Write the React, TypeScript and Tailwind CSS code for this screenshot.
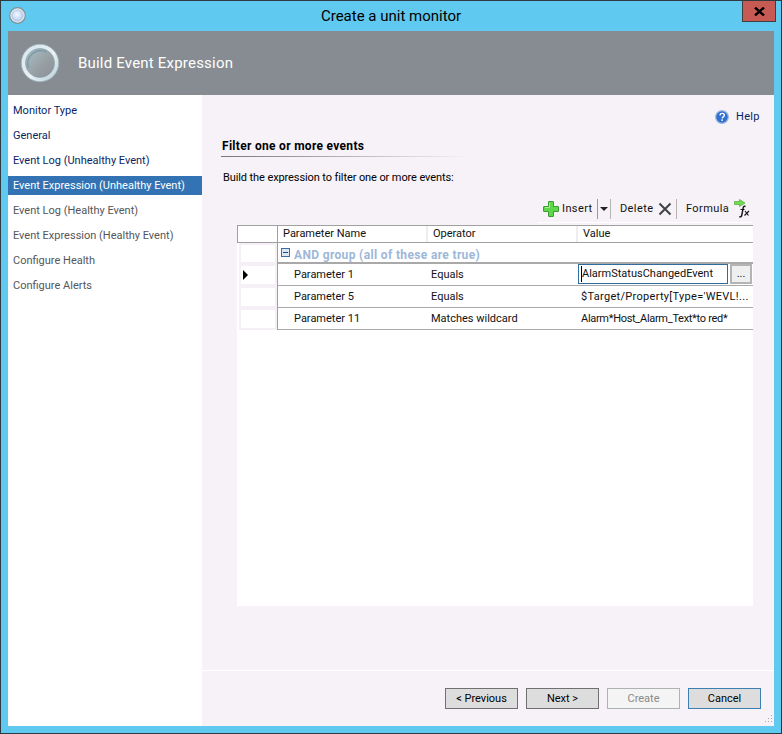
const font = "[font-family:'Roboto','Liberation_Sans',sans-serif]";

const steps = [
  { label: "Monitor Type", cls: "h-[25px] text-[#0b1f66]" },
  { label: "General", cls: "h-[25px] text-[#0b1f66]" },
  { label: "Event Log (Unhealthy Event)", cls: "h-[25px] text-[#0b1f66]" },
  { label: "Event Expression (Unhealthy Event)", cls: "my-[3px] h-[19px] bg-[#3373b3] text-white" },
  { label: "Event Log (Healthy Event)", cls: "h-[25px] text-[#55565a]" },
  { label: "Event Expression (Healthy Event)", cls: "h-[25px] text-[#55565a]" },
  { label: "Configure Health", cls: "h-[25px] text-[#55565a]" },
  { label: "Configure Alerts", cls: "h-[25px] text-[#55565a]" },
];

const rows = [
  { name: "Parameter 5", op: "Equals", value: "$Target/Property[Type='WEVL!...", cls: "tracking-[.3px]" },
  { name: "Parameter 11", op: "Matches wildcard", value: "Alarm*Host_Alarm_Text*to red*", cls: "tracking-[-.3px]" },
];

function SmallOrb() {
  return (
    <svg width="17" height="17" viewBox="0 0 17 17">
      <defs>
        <radialGradient id="smallFill" cx="45%" cy="40%" r="60%">
          <stop offset="0%" stopColor="#f6f9ff" />
          <stop offset="100%" stopColor="#b4cdf3" />
        </radialGradient>
      </defs>
      <circle cx="8.500" cy="8.500" r="7.800" fill="#e4eef5" stroke="#7f9198" strokeWidth="1.200" />
      <circle cx="8.500" cy="8.500" r="5.600" fill="url(#smallFill)" stroke="#9fb4c6" strokeWidth=".6" />
    </svg>
  );
}

function BigOrb() {
  return (
    <svg width="40" height="40" viewBox="0 0 40 40">
      <defs>
        <linearGradient id="bigRing" x1="0" y1="0" x2="1" y2="1">
          <stop offset="0%" stopColor="#d4e4ec" />
          <stop offset="55%" stopColor="#e8f2f6" />
          <stop offset="100%" stopColor="#b3cbd6" />
        </linearGradient>
        <linearGradient id="bigFill" x1="0" y1="0" x2="1" y2="1">
          <stop offset="0%" stopColor="#a9c0c8" />
          <stop offset="60%" stopColor="#979ea3" />
          <stop offset="100%" stopColor="#8b9095" />
        </linearGradient>
      </defs>
      <circle cx="20" cy="20" r="18.700" fill="url(#bigRing)" stroke="#9fb2ba" strokeWidth=".8" />
      <circle cx="20" cy="20" r="14.500" fill="url(#bigFill)" stroke="#8fa2aa" strokeWidth=".8" />
      <path d="M8.500 25a13 13 0 0 1 18-16" fill="none" stroke="#7c99a6" strokeWidth="1.500" />
    </svg>
  );
}

function HelpIcon() {
  return (
    <svg width="14" height="14" viewBox="0 0 15 15">
      <circle cx="7.5" cy="7.5" r="6.800" fill="#3470cf" stroke="#9fb8e2" strokeWidth="1.200" />
      <path d="M5.300 5.800c.2-1.500 1.200-2.200 2.400-2.200 1.300 0 2.300.8 2.300 2 0 1.700-2.200 1.700-2.300 3.400" fill="none" stroke="#fff" strokeWidth="1.500" />
      <rect x="6.800" y="10" width="1.600" height="1.700" fill="#fff" />
    </svg>
  );
}

function PlusIcon() {
  return (
    <svg width="16" height="16" viewBox="0 0 16 16">
      <path d="M5.500 1q0-.5.5-.5h4q.5 0 .5.5v4.500H15q.5 0 .5.5v4q0 .5-.5.5h-4.500V15q0 .5-.5.5H6q-.5 0-.5-.5v-4.500H1q-.5 0-.5-.5V6q0-.5.5-.5h4.500z" fill="#5ed84a" stroke="#3a9a36" strokeWidth="1" />
      <path d="M6.500 2v4.500H2" fill="none" stroke="#a8f090" strokeWidth="1" />
    </svg>
  );
}

function DeleteIcon() {
  return (
    <svg width="14" height="14" viewBox="0 0 14 14">
      <path d="M1.500 1.500l11 11M12.500 1.500l-11 11" stroke="#3f4347" strokeWidth="2" fill="none" />
    </svg>
  );
}

function FormulaIcon() {
  return (
    <svg width="16" height="20" viewBox="0 0 16 20" className="overflow-visible">
      <path d="M.500 2.500h5V.500L11 4l-5.500 3.500v-2h-5z" fill="#72dc52" stroke="#52a838" strokeWidth=".7" />
      <path d="M11.500 7.500c-1.300-.6-2-.1-2.300 1.300L7.800 16c-.3 1.500-1 2.200-2.600 1.800" fill="none" stroke="#111" strokeWidth="1.400" />
      <path d="M6.500 10.500h4M11 12l3.500 4.500M15 12l-4.500 4.500" fill="none" stroke="#111" strokeWidth="1.100" />
    </svg>
  );
}

function RowHead({ arrow }: { arrow?: boolean }) {
  return (
    <div className="flex h-full w-[41px] shrink-0 items-center border-r border-r-[#a0a0a0] bg-white pl-[2px]">
      <div className="flex h-full w-[38px] items-center border-2 border-[#f4f0f5] pl-[2px]">
        {arrow && <div className="h-0 w-0 border-y-[5px] border-l-[5px] border-y-transparent border-l-black" />}
      </div>
    </div>
  );
}

function FooterButton({ label, tone }: { label: string; tone: "normal" | "disabled" | "default" }) {
  const cls =
    tone === "disabled"
      ? "border-[#adb2b5] bg-[#f4f4f4] text-[#8a8a8a]"
      : tone === "default"
        ? "border-[#3c7fb1] bg-[#dddddd] text-black"
        : "border-[#707070] bg-[#dddddd] text-black";
  return <div className={`flex h-[21px] w-[73px] items-center justify-center border ${cls}`}>{label}</div>;
}

export default function App() {
  return (
    <div className={`flex h-[734px] w-[782px] flex-col overflow-hidden border border-[#2f3a40] bg-[#60c9ef] text-[11px] leading-[16px] ${font}`}>
      {/* caption */}
      <div className="relative flex h-[30px] shrink-0 items-center justify-center">
        <div className="absolute left-[8px] top-[6px]">
          <SmallOrb />
        </div>
        <span className="text-[15px] text-black">Create a unit monitor</span>
        <div className="absolute right-[5px] top-0 flex h-[21px] w-[34px] items-center justify-center border border-t-0 border-[#3f3f3f] bg-[#c75b54]">
          <svg width="11" height="9" viewBox="0 0 11 9">
            <path d="M1 .500l9 8M10 .500l-9 8" stroke="#000" strokeWidth="2.400" fill="none" />
          </svg>
        </div>
      </div>

      <div className="mx-[7px] mb-[7px] flex min-h-0 flex-1 flex-col">
        {/* banner */}
        <div className="flex h-[64px] shrink-0 items-center gap-[18px] bg-[#868c92] pl-[12px]">
          <BigOrb />
          <span className="text-[15px] tracking-[.2px] text-white">Build Event Expression</span>
        </div>

        <div className="flex min-h-0 flex-1">
          {/* steps */}
          <div className="flex w-[194px] shrink-0 flex-col bg-white pt-[3px]">
            {steps.map((s) => (
              <div key={s.label} className={`flex items-center whitespace-nowrap pl-[5px] ${s.cls}`}>
                {s.label}
              </div>
            ))}
          </div>

          {/* page */}
          <div className="flex min-w-0 flex-1 flex-col bg-[#f6f2f7]">
            <div className="flex h-[576px] shrink-0 flex-col border-b border-b-white pl-[19px] pr-[21px]">
              <div className="flex items-center justify-end gap-[7px] pt-[14px] text-[#0b1f66]">
                <HelpIcon />
                <span className="mr-[-5px] w-[22px] tracking-[.3px]">Help</span>
              </div>
              <div className="mt-[13px] pl-px text-[12px] font-bold tracking-[.3px] text-black">Filter one or more events</div>
              <div className="mt-[2px] h-px w-[248px] bg-gradient-to-r from-[#77747a] to-transparent" />
              <div className="mt-[13px] pl-[2px] tracking-[-.1px] text-black">Build the expression to filter one or more events:</div>

              <div className="ml-[16px] flex flex-col">
                {/* toolbar */}
                <div className="mt-[12px] flex h-[25px] w-[215px] items-center self-end border-b border-b-white pb-[2px] pl-[5px] tracking-[.4px] text-[#111]">
                  <PlusIcon />
                  <span className="ml-[3px] w-[30px]">Insert</span>
                  <div className="ml-[5px] h-[20px] border-l border-l-[#9a9a9a]" />
                  <div className="ml-[2px] h-0 w-0 border-x-[4px] border-t-[4px] border-x-transparent border-t-[#222]" />
                  <div className="ml-[2px] h-[20px] border-l border-l-[#b5b5b5]" />
                  <span className="ml-[9px] w-[33px]">Delete</span>
                  <div className="ml-[5px]">
                    <DeleteIcon />
                  </div>
                  <div className="ml-[4px] h-[20px] border-l border-l-[#b5b5b5]" />
                  <span className="ml-[9px] w-[44px]">Formula</span>
                  <div className="ml-[4px]">
                    <FormulaIcon />
                  </div>
                </div>

                {/* grid */}
                <div className="mt-[2px] flex h-[381px] flex-col overflow-hidden bg-white text-[#111]">
                  <div className="flex h-[18px] shrink-0 border-y border-y-[#a0a0a0] bg-white">
                    <div className="w-[41px] shrink-0 border-x border-x-[#a0a0a0]" />
                    <div className="flex w-[150px] items-center border-r-2 border-r-[#f0edf1] pl-[5px]">Parameter Name</div>
                    <div className="flex w-[150px] items-center border-r-2 border-r-[#f0edf1] pl-[5px]">Operator</div>
                    <div className="flex flex-1 items-center pl-[5px]">Value</div>
                  </div>
                  <div className="flex h-[21px] shrink-0">
                    <RowHead />
                    <div className="flex flex-1 items-start gap-[4px] border-b-2 border-b-[#a9a9a9] pl-[3px] pt-[4px] text-[12px] font-bold tracking-[.35px] text-[#9db7d8]">
                      <div className="mt-[1px] flex h-[9px] w-[9px] items-center justify-center border border-[#3a6ea5] bg-[#dce6f2]">
                        <div className="h-px w-[5px] bg-[#1f4f8a]" />
                      </div>
                      AND group (all of these are true)
                    </div>
                  </div>
                  <div className="flex h-[22px] shrink-0">
                    <RowHead arrow />
                    <div className="flex flex-1 items-center border-b border-b-[#a9a9a9]">
                      <div className="w-[150px] shrink-0 pl-[16px]">Parameter 1</div>
                      <div className="w-[150px] shrink-0 pl-[3px]">Equals</div>
                      <div className="flex h-full flex-1 items-center gap-[2px] pb-px">
                        <div className="flex h-[20px] w-[150px] items-center whitespace-nowrap border border-[#2f6c9e] pl-[2px]">
                          <span className="border-l border-l-black">AlarmStatusChangedEvent</span>
                        </div>
                        <div className="flex h-[20px] w-[22px] items-center justify-center border-2 border-[#b4b4b4] bg-[#efefef]">...</div>
                      </div>
                    </div>
                  </div>
                  {rows.map((r) => (
                    <div key={r.name} className="flex h-[22px] shrink-0">
                      <RowHead />
                      <div className="flex flex-1 items-center whitespace-nowrap border-b border-b-[#a9a9a9]">
                        <div className="w-[150px] shrink-0 pl-[16px]">{r.name}</div>
                        <div className="w-[150px] shrink-0 pl-[3px]">{r.op}</div>
                        <div className={`pl-[3px] ${r.cls}`}>{r.value}</div>
                      </div>
                    </div>
                  ))}
                </div>
              </div>
            </div>

            {/* wizard buttons */}
            <div className="relative flex flex-1 items-start justify-end gap-[8px] pr-[13px] pt-[17px]">
              <FooterButton label="< Previous" tone="normal" />
              <FooterButton label="Next >" tone="normal" />
              <FooterButton label="Create" tone="disabled" />
              <FooterButton label="Cancel" tone="default" />
              <svg className="absolute bottom-[2px] right-[1px]" width="10" height="10" viewBox="0 0 10 10" fill="#a8a8a8">
                <rect x="8" y="1" width="1" height="1" />
                <rect x="5" y="4" width="1" height="1" />
                <rect x="8" y="4" width="1" height="1" />
                <rect x="2" y="7" width="1" height="1" />
                <rect x="5" y="7" width="1" height="1" />
                <rect x="8" y="7" width="1" height="1" />
              </svg>
            </div>
          </div>
        </div>
      </div>
    </div>
  );
}
